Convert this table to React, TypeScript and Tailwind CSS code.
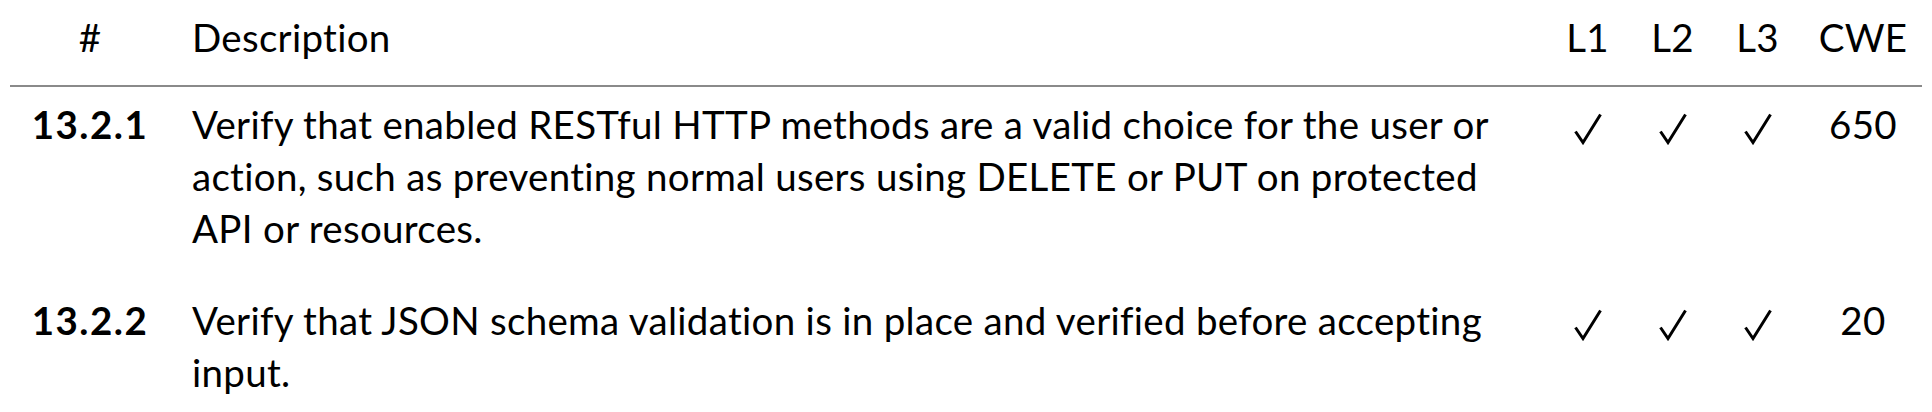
const rows = [
  {
    id: "13.2.1",
    text: "Verify that enabled RESTful HTTP methods are a valid choice for the user or action, such as preventing normal users using DELETE or PUT on protected API or resources.",
    l1: true,
    l2: true,
    l3: true,
    cwe: "650",
  },
  {
    id: "13.2.2",
    text: "Verify that JSON schema validation is in place and verified before accepting input.",
    l1: true,
    l2: true,
    l3: true,
    cwe: "20",
  },
];

function Check({ on }: { on: boolean }) {
  if (!on) return null;
  return (
    <svg width="30" height="32" viewBox="0 0 30 32" className="inline-block align-[-6px]">
      <path d="M2.5 18.5 L10 29.5 L27.5 1.5" fill="none" stroke="black" strokeWidth="3" strokeLinejoin="miter" />
    </svg>
  );
}

export default function App() {
  return (
    <div className="w-[1932px] h-[412px] bg-white text-black font-['Lato',sans-serif] text-[38.5px] tracking-[0.3px] leading-[52px] [font-variant-ligatures:none] px-[10px] overflow-hidden">
      {/* header */}
      <div className="grid grid-cols-[160px_1375px_85px_85px_85px_126px] pt-[11px] pb-[22px] border-b-2 border-[#8a8a8a]">
        <div className="text-center">#</div>
        <div className="pl-[22px]">Description</div>
        <div className="text-center">L1</div>
        <div className="text-center">L2</div>
        <div className="text-center">L3</div>
        <div className="text-center">CWE</div>
      </div>

      {rows.map((r, i) => (
        <div
          key={r.id}
          className={`grid grid-cols-[160px_1375px_85px_85px_85px_126px] ${i === 0 ? "pt-[11px] pb-[20px]" : "pt-[20px]"}`}
        >
          <div className="text-center font-bold tracking-[1.5px]">{r.id}</div>
          <div className="pl-[22px] pr-[53px]">{r.text}</div>
          <div className="text-center"><Check on={r.l1} /></div>
          <div className="text-center"><Check on={r.l2} /></div>
          <div className="text-center"><Check on={r.l3} /></div>
          <div className="text-center">{r.cwe}</div>
        </div>
      ))}
    </div>
  );
}
